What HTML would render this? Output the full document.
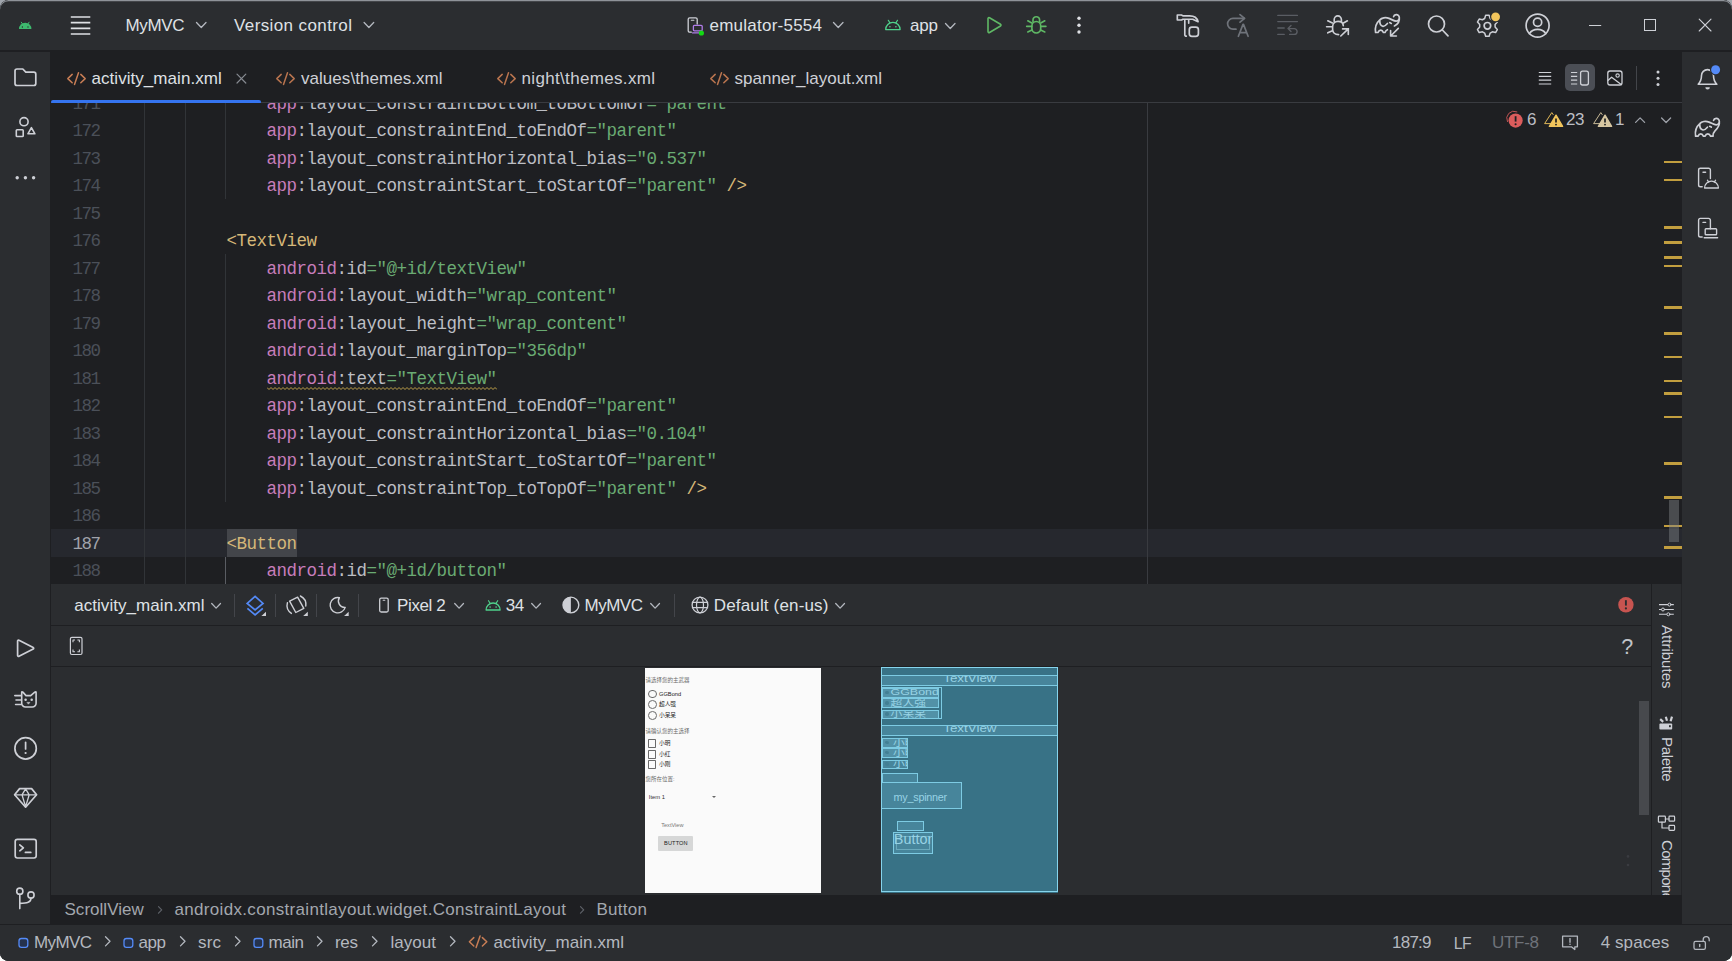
<!DOCTYPE html>
<html lang="en"><head><meta charset="utf-8"><title>activity_main.xml - MyMVC</title>
<style>
html,body{margin:0;padding:0;background:#fff;}
body{width:1732px;height:961px;overflow:hidden;position:relative;font-family:"Liberation Sans","Noto Sans CJK SC",sans-serif;}
#topbg{position:absolute;left:0;top:0;width:1732px;height:14px;background:#a0a5ac;}
#win{position:absolute;left:0;top:0;width:1732px;height:961px;background:#2b2d30;border-radius:8.5px;overflow:hidden;}
.b{position:absolute;display:block;}
.t{position:absolute;white-space:pre;display:block;}
.code{font-family:"Liberation Mono",monospace;}
</style></head><body><div id="topbg"></div><div id="win">
<div class="b" style="left:0px;top:0px;width:1732px;height:961px;background:#2b2d30;"></div>
<div class="b" style="left:50px;top:50px;width:1632px;height:875px;background:#1e1f22;"></div>
<div class="b" style="left:0px;top:50px;width:1732px;height:1.5px;background:#1e1f22;"></div>
<div class="b" style="left:0px;top:51.5px;width:50px;height:872.5px;background:#2b2d30;"></div>
<div class="b" style="left:1682px;top:51.5px;width:50px;height:872.5px;background:#2b2d30;"></div>
<div class="b" style="left:0px;top:924px;width:1732px;height:1px;background:#1e1f22;"></div>
<div class="b" style="left:0px;top:925px;width:1732px;height:36px;background:#2b2d30;"></div>
<div class="b" style="left:0;top:0;width:1732px;height:961px;border-radius:8.5px;box-shadow:inset 0 1.2px 0 #8f9399;pointer-events:none;z-index:50"></div>
<span class="t " style="left:125.50px;top:15.11px;font-size:17px;line-height:22px;letter-spacing:-0.359px;color:#dfe1e5;">MyMVC</span>
<span class="t " style="left:234.00px;top:15.11px;font-size:17px;line-height:22px;letter-spacing:0.396px;color:#dfe1e5;">Version control</span>
<span class="t " style="left:709.50px;top:15.11px;font-size:17px;line-height:22px;letter-spacing:0.240px;color:#dfe1e5;">emulator-5554</span>
<span class="t " style="left:910.00px;top:15.11px;font-size:17px;line-height:22px;letter-spacing:-0.178px;color:#dfe1e5;">app</span>
<div class="b" style="left:51px;top:102px;width:1631px;height:1px;background:#393b40;"></div>
<div class="b" style="left:51px;top:100px;width:210px;height:4px;background:#3574f0;border-radius:2px"></div>
<span class="t " style="left:91.50px;top:68.11px;font-size:17px;line-height:22px;letter-spacing:0.049px;color:#dfe1e5;">activity_main.xml</span>
<span class="t " style="left:301.00px;top:68.11px;font-size:17px;line-height:22px;letter-spacing:0.045px;color:#ced0d6;">values\themes.xml</span>
<span class="t " style="left:521.50px;top:68.11px;font-size:17px;line-height:22px;letter-spacing:0.333px;color:#ced0d6;">night\themes.xml</span>
<span class="t " style="left:734.50px;top:68.11px;font-size:17px;line-height:22px;letter-spacing:0.005px;color:#ced0d6;">spanner_layout.xml</span>
<div class="b" id="code" style="left:51px;top:103px;width:1631px;height:481px;overflow:hidden;background:#1e1f22">
<div class="b" style="left:0px;top:426.0px;width:1631px;height:27.5px;background:#26282e;"></div>
<div class="b" style="left:93px;top:0px;width:1px;height:481px;background:#313438;"></div>
<div class="b" style="left:134px;top:0px;width:1px;height:481px;background:#313438;"></div>
<div class="b" style="left:174px;top:0px;width:1px;height:96.0px;background:#313438;"></div>
<div class="b" style="left:174px;top:151.0px;width:1px;height:247.5px;background:#313438;"></div>
<div class="b" style="left:174px;top:453.5px;width:1px;height:40px;background:#5a5d63;"></div>
<div class="b" style="left:1096px;top:0px;width:1px;height:481px;background:#393b40;"></div>
<div class="b" style="left:176px;top:426.0px;width:70px;height:27.5px;background:#43454a;"></div>
<div class="t code" style="left:215.50px;top:-12.46px;font-size:17.5px;line-height:27px;letter-spacing:-0.502px;"><span style="color:#c77dbb">app</span><span style="color:#bcbec4">:layout_constraintBottom_toBottomOf</span><span style="color:#6aab73">=&quot;parent&quot;</span></div>
<div class="t code" style="left:21.50px;top:-12.46px;font-size:17.5px;line-height:27px;letter-spacing:-1.502px;color:#4b5059">171</div>
<div class="t code" style="left:215.50px;top:15.04px;font-size:17.5px;line-height:27px;letter-spacing:-0.502px;"><span style="color:#c77dbb">app</span><span style="color:#bcbec4">:layout_constraintEnd_toEndOf</span><span style="color:#6aab73">=&quot;parent&quot;</span></div>
<div class="t code" style="left:21.50px;top:15.04px;font-size:17.5px;line-height:27px;letter-spacing:-1.502px;color:#4b5059">172</div>
<div class="t code" style="left:215.50px;top:42.54px;font-size:17.5px;line-height:27px;letter-spacing:-0.502px;"><span style="color:#c77dbb">app</span><span style="color:#bcbec4">:layout_constraintHorizontal_bias</span><span style="color:#6aab73">=&quot;0.537&quot;</span></div>
<div class="t code" style="left:21.50px;top:42.54px;font-size:17.5px;line-height:27px;letter-spacing:-1.502px;color:#4b5059">173</div>
<div class="t code" style="left:215.50px;top:70.04px;font-size:17.5px;line-height:27px;letter-spacing:-0.502px;"><span style="color:#c77dbb">app</span><span style="color:#bcbec4">:layout_constraintStart_toStartOf</span><span style="color:#6aab73">=&quot;parent&quot;</span><span style="color:#d5b778"> /&gt;</span></div>
<div class="t code" style="left:21.50px;top:70.04px;font-size:17.5px;line-height:27px;letter-spacing:-1.502px;color:#4b5059">174</div>
<div class="t code" style="left:215.50px;top:97.54px;font-size:17.5px;line-height:27px;letter-spacing:-0.502px;"></div>
<div class="t code" style="left:21.50px;top:97.54px;font-size:17.5px;line-height:27px;letter-spacing:-1.502px;color:#4b5059">175</div>
<div class="t code" style="left:175.50px;top:125.04px;font-size:17.5px;line-height:27px;letter-spacing:-0.502px;"><span style="color:#d5b778">&lt;TextView</span></div>
<div class="t code" style="left:21.50px;top:125.04px;font-size:17.5px;line-height:27px;letter-spacing:-1.502px;color:#4b5059">176</div>
<div class="t code" style="left:215.50px;top:152.54px;font-size:17.5px;line-height:27px;letter-spacing:-0.502px;"><span style="color:#c77dbb">android</span><span style="color:#bcbec4">:id</span><span style="color:#6aab73">=&quot;@+id/textView&quot;</span></div>
<div class="t code" style="left:21.50px;top:152.54px;font-size:17.5px;line-height:27px;letter-spacing:-1.502px;color:#4b5059">177</div>
<div class="t code" style="left:215.50px;top:180.04px;font-size:17.5px;line-height:27px;letter-spacing:-0.502px;"><span style="color:#c77dbb">android</span><span style="color:#bcbec4">:layout_width</span><span style="color:#6aab73">=&quot;wrap_content&quot;</span></div>
<div class="t code" style="left:21.50px;top:180.04px;font-size:17.5px;line-height:27px;letter-spacing:-1.502px;color:#4b5059">178</div>
<div class="t code" style="left:215.50px;top:207.54px;font-size:17.5px;line-height:27px;letter-spacing:-0.502px;"><span style="color:#c77dbb">android</span><span style="color:#bcbec4">:layout_height</span><span style="color:#6aab73">=&quot;wrap_content&quot;</span></div>
<div class="t code" style="left:21.50px;top:207.54px;font-size:17.5px;line-height:27px;letter-spacing:-1.502px;color:#4b5059">179</div>
<div class="t code" style="left:215.50px;top:235.04px;font-size:17.5px;line-height:27px;letter-spacing:-0.502px;"><span style="color:#c77dbb">android</span><span style="color:#bcbec4">:layout_marginTop</span><span style="color:#6aab73">=&quot;356dp&quot;</span></div>
<div class="t code" style="left:21.50px;top:235.04px;font-size:17.5px;line-height:27px;letter-spacing:-1.502px;color:#4b5059">180</div>
<div class="t code" style="left:215.50px;top:262.54px;font-size:17.5px;line-height:27px;letter-spacing:-0.502px;"><span style="color:#c77dbb">android</span><span style="color:#bcbec4">:text</span><span style="color:#6aab73">=&quot;TextView&quot;</span></div>
<div class="t code" style="left:21.50px;top:262.54px;font-size:17.5px;line-height:27px;letter-spacing:-1.502px;color:#4b5059">181</div>
<div class="t code" style="left:215.50px;top:290.04px;font-size:17.5px;line-height:27px;letter-spacing:-0.502px;"><span style="color:#c77dbb">app</span><span style="color:#bcbec4">:layout_constraintEnd_toEndOf</span><span style="color:#6aab73">=&quot;parent&quot;</span></div>
<div class="t code" style="left:21.50px;top:290.04px;font-size:17.5px;line-height:27px;letter-spacing:-1.502px;color:#4b5059">182</div>
<div class="t code" style="left:215.50px;top:317.54px;font-size:17.5px;line-height:27px;letter-spacing:-0.502px;"><span style="color:#c77dbb">app</span><span style="color:#bcbec4">:layout_constraintHorizontal_bias</span><span style="color:#6aab73">=&quot;0.104&quot;</span></div>
<div class="t code" style="left:21.50px;top:317.54px;font-size:17.5px;line-height:27px;letter-spacing:-1.502px;color:#4b5059">183</div>
<div class="t code" style="left:215.50px;top:345.04px;font-size:17.5px;line-height:27px;letter-spacing:-0.502px;"><span style="color:#c77dbb">app</span><span style="color:#bcbec4">:layout_constraintStart_toStartOf</span><span style="color:#6aab73">=&quot;parent&quot;</span></div>
<div class="t code" style="left:21.50px;top:345.04px;font-size:17.5px;line-height:27px;letter-spacing:-1.502px;color:#4b5059">184</div>
<div class="t code" style="left:215.50px;top:372.54px;font-size:17.5px;line-height:27px;letter-spacing:-0.502px;"><span style="color:#c77dbb">app</span><span style="color:#bcbec4">:layout_constraintTop_toTopOf</span><span style="color:#6aab73">=&quot;parent&quot;</span><span style="color:#d5b778"> /&gt;</span></div>
<div class="t code" style="left:21.50px;top:372.54px;font-size:17.5px;line-height:27px;letter-spacing:-1.502px;color:#4b5059">185</div>
<div class="t code" style="left:215.50px;top:400.04px;font-size:17.5px;line-height:27px;letter-spacing:-0.502px;"></div>
<div class="t code" style="left:21.50px;top:400.04px;font-size:17.5px;line-height:27px;letter-spacing:-1.502px;color:#4b5059">186</div>
<div class="t code" style="left:175.50px;top:427.54px;font-size:17.5px;line-height:27px;letter-spacing:-0.502px;"><span style="color:#d5b778">&lt;Button</span></div>
<div class="t code" style="left:21.50px;top:427.54px;font-size:17.5px;line-height:27px;letter-spacing:-1.502px;color:#a1a3ab">187</div>
<div class="t code" style="left:215.50px;top:455.04px;font-size:17.5px;line-height:27px;letter-spacing:-0.502px;"><span style="color:#c77dbb">android</span><span style="color:#bcbec4">:id</span><span style="color:#6aab73">=&quot;@+id/button&quot;</span></div>
<div class="t code" style="left:21.50px;top:455.04px;font-size:17.5px;line-height:27px;letter-spacing:-1.502px;color:#4b5059">188</div>
<svg class="b" style="left:216px;top:284.0px" width="230" height="4" viewBox="0 0 230 4"><polyline points="0,0.5 2,2.5 4,0.5 6,2.5 8,0.5 10,2.5 12,0.5 14,2.5 16,0.5 18,2.5 20,0.5 22,2.5 24,0.5 26,2.5 28,0.5 30,2.5 32,0.5 34,2.5 36,0.5 38,2.5 40,0.5 42,2.5 44,0.5 46,2.5 48,0.5 50,2.5 52,0.5 54,2.5 56,0.5 58,2.5 60,0.5 62,2.5 64,0.5 66,2.5 68,0.5 70,2.5 72,0.5 74,2.5 76,0.5 78,2.5 80,0.5 82,2.5 84,0.5 86,2.5 88,0.5 90,2.5 92,0.5 94,2.5 96,0.5 98,2.5 100,0.5 102,2.5 104,0.5 106,2.5 108,0.5 110,2.5 112,0.5 114,2.5 116,0.5 118,2.5 120,0.5 122,2.5 124,0.5 126,2.5 128,0.5 130,2.5 132,0.5 134,2.5 136,0.5 138,2.5 140,0.5 142,2.5 144,0.5 146,2.5 148,0.5 150,2.5 152,0.5 154,2.5 156,0.5 158,2.5 160,0.5 162,2.5 164,0.5 166,2.5 168,0.5 170,2.5 172,0.5 174,2.5 176,0.5 178,2.5 180,0.5 182,2.5 184,0.5 186,2.5 188,0.5 190,2.5 192,0.5 194,2.5 196,0.5 198,2.5 200,0.5 202,2.5 204,0.5 206,2.5 208,0.5 210,2.5 212,0.5 214,2.5 216,0.5 218,2.5 220,0.5 222,2.5 224,0.5 226,2.5 228,0.5 230,2.5" fill="none" stroke="#bfa14a" stroke-width="1"/></svg>
<div class="b" style="left:1613px;top:57.80000000000001px;width:17.5px;height:2.6px;background:#c29e3f;"></div>
<div class="b" style="left:1613px;top:75.80000000000001px;width:17.5px;height:2.6px;background:#c29e3f;"></div>
<div class="b" style="left:1613px;top:123.30000000000001px;width:17.5px;height:2.6px;background:#c29e3f;"></div>
<div class="b" style="left:1613px;top:138.3px;width:17.5px;height:2.6px;background:#c29e3f;"></div>
<div class="b" style="left:1613px;top:153.3px;width:17.5px;height:2.6px;background:#c29e3f;"></div>
<div class="b" style="left:1613px;top:161.8px;width:17.5px;height:2.6px;background:#c29e3f;"></div>
<div class="b" style="left:1613px;top:203.3px;width:17.5px;height:2.6px;background:#c29e3f;"></div>
<div class="b" style="left:1613px;top:229.3px;width:17.5px;height:2.6px;background:#c29e3f;"></div>
<div class="b" style="left:1613px;top:252.8px;width:17.5px;height:2.6px;background:#c29e3f;"></div>
<div class="b" style="left:1613px;top:276.8px;width:17.5px;height:2.6px;background:#c29e3f;"></div>
<div class="b" style="left:1613px;top:289.3px;width:17.5px;height:2.6px;background:#c29e3f;"></div>
<div class="b" style="left:1613px;top:312.8px;width:17.5px;height:2.6px;background:#c29e3f;"></div>
<div class="b" style="left:1613px;top:359.3px;width:17.5px;height:2.6px;background:#c29e3f;"></div>
<div class="b" style="left:1613px;top:393.3px;width:17.5px;height:2.6px;background:#c29e3f;"></div>
<div class="b" style="left:1613px;top:421.79999999999995px;width:17.5px;height:2.6px;background:#c29e3f;"></div>
<div class="b" style="left:1613px;top:443.29999999999995px;width:17.5px;height:2.6px;background:#c29e3f;"></div>
<div class="b" style="left:1618px;top:397px;width:10px;height:42px;background:rgba(128,130,135,0.45);"></div>
<span class="t " style="left:1527.00px;top:109.41px;font-size:17px;line-height:22px;letter-spacing:0.000px;color:#bcbec4;margin-left:-51px;margin-top:-103px;">6</span>
<span class="t " style="left:1566.00px;top:109.41px;font-size:17px;line-height:22px;letter-spacing:-0.404px;color:#bcbec4;margin-left:-51px;margin-top:-103px;">23</span>
<span class="t " style="left:1615.00px;top:109.41px;font-size:17px;line-height:22px;letter-spacing:0.000px;color:#bcbec4;margin-left:-51px;margin-top:-103px;">1</span>
</div>
<div class="b" style="left:51px;top:584px;width:1631px;height:310.5px;background:#2b2d30;"></div>
<div class="b" style="left:51px;top:625px;width:1600.5px;height:1px;background:#1e1f22;"></div>
<div class="b" style="left:51px;top:665.5px;width:1600.5px;height:1px;background:#1e1f22;"></div>
<div class="b" style="left:1651px;top:584px;width:1px;height:310.5px;background:#1e1f22;"></div>
<div class="b" style="left:1681px;top:584px;width:1px;height:310.5px;background:#232427;"></div>
<div class="b" style="left:234px;top:593.5px;width:1px;height:23px;background:#43454a;"></div>
<div class="b" style="left:275px;top:593.5px;width:1px;height:23px;background:#43454a;"></div>
<div class="b" style="left:316px;top:593.5px;width:1px;height:23px;background:#43454a;"></div>
<div class="b" style="left:358px;top:593.5px;width:1px;height:23px;background:#43454a;"></div>
<div class="b" style="left:674px;top:593.5px;width:1px;height:23px;background:#43454a;"></div>
<span class="t " style="left:74.20px;top:595.11px;font-size:17px;line-height:22px;letter-spacing:0.055px;color:#dfe1e5;">activity_main.xml</span>
<span class="t " style="left:397.00px;top:595.11px;font-size:17px;line-height:22px;letter-spacing:-0.369px;color:#dfe1e5;">Pixel 2</span>
<span class="t " style="left:505.70px;top:595.11px;font-size:17px;line-height:22px;letter-spacing:-0.304px;color:#dfe1e5;">34</span>
<span class="t " style="left:584.50px;top:595.11px;font-size:17px;line-height:22px;letter-spacing:-0.484px;color:#dfe1e5;">MyMVC</span>
<span class="t " style="left:713.80px;top:595.11px;font-size:17px;line-height:22px;letter-spacing:0.154px;color:#dfe1e5;">Default (en-us)</span>
<span class="t " style="left:1621.30px;top:632.95px;font-size:21.5px;line-height:28px;letter-spacing:0.000px;color:#c0c3c9;">?</span>
<div class="b" style="left:51px;top:894.5px;width:1631px;height:29.5px;background:#1e1f22;"></div>
<span class="t " style="left:64.50px;top:899.11px;font-size:17px;line-height:22px;letter-spacing:0.022px;color:#a3a7ae;">ScrollView</span>
<span class="t " style="left:174.50px;top:899.11px;font-size:17px;line-height:22px;letter-spacing:0.321px;color:#a3a7ae;">androidx.constraintlayout.widget.ConstraintLayout</span>
<span class="t " style="left:596.50px;top:899.11px;font-size:17px;line-height:22px;letter-spacing:0.271px;color:#a3a7ae;">Button</span>
<span class="t " style="left:34.00px;top:932.11px;font-size:17px;line-height:22px;letter-spacing:-0.609px;color:#b4b8bf;">MyMVC</span>
<span class="t " style="left:138.50px;top:932.11px;font-size:17px;line-height:22px;letter-spacing:-0.428px;color:#b4b8bf;">app</span>
<span class="t " style="left:198.00px;top:932.11px;font-size:17px;line-height:22px;letter-spacing:0.169px;color:#b4b8bf;">src</span>
<span class="t " style="left:268.50px;top:932.11px;font-size:17px;line-height:22px;letter-spacing:-0.452px;color:#b4b8bf;">main</span>
<span class="t " style="left:335.00px;top:932.11px;font-size:17px;line-height:22px;letter-spacing:-0.307px;color:#b4b8bf;">res</span>
<span class="t " style="left:390.50px;top:932.11px;font-size:17px;line-height:22px;letter-spacing:0.029px;color:#b4b8bf;">layout</span>
<span class="t " style="left:493.50px;top:932.11px;font-size:17px;line-height:22px;letter-spacing:0.067px;color:#b4b8bf;">activity_main.xml</span>
<span class="t " style="left:1392.00px;top:932.11px;font-size:17px;line-height:22px;letter-spacing:-0.759px;color:#b4b8bf;">187:9</span>
<span class="t " style="left:1453.80px;top:933.03px;font-size:15.8px;line-height:21px;letter-spacing:-0.639px;color:#b4b8bf;">LF</span>
<span class="t " style="left:1492.00px;top:932.11px;font-size:17px;line-height:22px;letter-spacing:-0.290px;color:#6f737a;">UTF-8</span>
<span class="t " style="left:1600.70px;top:932.11px;font-size:17px;line-height:22px;letter-spacing:0.081px;color:#b4b8bf;">4 spaces</span>
<span class="t" style="left:1677.00px;top:625.00px;font-size:15px;line-height:20px;letter-spacing:0.016px;color:#ced0d6;transform-origin:0 0;transform:rotate(90deg)">Attributes</span>
<span class="t" style="left:1677.00px;top:737.00px;font-size:15px;line-height:20px;letter-spacing:-0.332px;color:#ced0d6;transform-origin:0 0;transform:rotate(90deg)">Palette</span>
<div class="b" style="left:1652px;top:830px;width:30px;height:64.5px;overflow:hidden">
<span class="t" style="left:25.00px;top:10.00px;font-size:15px;line-height:20px;letter-spacing:-0.700px;color:#ced0d6;transform-origin:0 0;transform:rotate(90deg)">Component Tree</span>
</div>
<div class="b" style="left:645px;top:667.5px;width:176.2px;height:225.8px;background:#fafafa;overflow:hidden;font-family:'Liberation Sans','Noto Sans CJK SC',sans-serif">
<span class="t" style="left:0.60px;top:8.50px;font-size:5.5px;line-height:8px;color:#6a6a6a;">请选择您的主武器</span>
<div class="b" style="left:3.1000000000000227px;top:22.00px;width:6.8px;height:6.8px;border:0.9px solid #6a6a6a;border-radius:50%;box-sizing:content-box"></div>
<span class="t" style="left:14.00px;top:22.10px;font-size:5.7px;line-height:8px;color:#1a1a1a;">GGBond</span>
<div class="b" style="left:3.1000000000000227px;top:32.80px;width:6.8px;height:6.8px;border:0.9px solid #6a6a6a;border-radius:50%;box-sizing:content-box"></div>
<span class="t" style="left:14.00px;top:32.90px;font-size:5.7px;line-height:8px;color:#1a1a1a;">超人强</span>
<div class="b" style="left:3.1000000000000227px;top:43.70px;width:6.8px;height:6.8px;border:0.9px solid #6a6a6a;border-radius:50%;box-sizing:content-box"></div>
<span class="t" style="left:14.00px;top:43.80px;font-size:5.7px;line-height:8px;color:#1a1a1a;">小呆呆</span>
<span class="t" style="left:0.60px;top:59.70px;font-size:5.5px;line-height:8px;color:#6a6a6a;">请确认您的主选择</span>
<div class="b" style="left:3.2999999999999545px;top:71.90px;width:6.2px;height:6.2px;border:0.9px solid #6a6a6a;border-radius:0.8px;box-sizing:content-box"></div>
<span class="t" style="left:14.00px;top:71.70px;font-size:5.7px;line-height:8px;color:#1a1a1a;">小明</span>
<div class="b" style="left:3.2999999999999545px;top:82.90px;width:6.2px;height:6.2px;border:0.9px solid #6a6a6a;border-radius:0.8px;box-sizing:content-box"></div>
<span class="t" style="left:14.00px;top:82.70px;font-size:5.7px;line-height:8px;color:#1a1a1a;">小红</span>
<div class="b" style="left:3.2999999999999545px;top:92.90px;width:6.2px;height:6.2px;border:0.9px solid #6a6a6a;border-radius:0.8px;box-sizing:content-box"></div>
<span class="t" style="left:14.00px;top:92.70px;font-size:5.7px;line-height:8px;color:#1a1a1a;">小刚</span>
<span class="t" style="left:0.60px;top:107.20px;font-size:5.5px;line-height:8px;color:#6a6a6a;">您所在位置:</span>
<span class="t" style="left:3.80px;top:125.10px;font-size:5.8px;line-height:8px;color:#333;">Item 1</span>
<div class="b" style="left:66.60000000000002px;top:128.10000000000002px;width:0;height:0;border-left:2.1px solid transparent;border-right:2.1px solid transparent;border-top:2.2px solid #666"></div>
<span class="t" style="left:16.20px;top:153.70px;font-size:5.6px;line-height:8px;color:#777;">TextView</span>
<div class="b" style="left:13.200000000000045px;top:168.0px;width:34.8px;height:15.6px;background:#d6d7d7;border-radius:1px"></div>
<span class="t" style="left:19.00px;top:171.90px;font-size:5.6px;line-height:8px;color:#222;letter-spacing:0.15px;">BUTTON</span>
</div>
<div class="b" id="bp" style="left:881px;top:667px;width:177.3px;height:226px;background:#387286;overflow:hidden">
<div class="b" style="left:0.00px;top:7.80px;width:175.30px;height:9.50px;background:#47859b;border:1px solid #7dcbe3;overflow:hidden;">
<span class="t" style="left:61.20px;top:-5.54px;font-size:13.4px;line-height:16px;letter-spacing:0px;color:#97d3e5;transform-origin:0 12.64px;transform:scaleY(0.8);">TextView</span>
</div>
<div class="b" style="left:0.00px;top:20.00px;width:58.60px;height:30.20px;background:transparent;border:1px solid #7dcbe3;overflow:hidden;">
</div>
<div class="b" style="left:0.60px;top:20.60px;width:55.80px;height:8.00px;background:#5291a7;border:1px solid #7dcbe3;overflow:hidden;">
<div class="b" style="left:2.6px;top:2.10px;width:3.6px;height:3.6px;border-radius:50%;background:#427f94"></div>
<span class="t" style="left:8.00px;top:-4.50px;font-size:12.4px;line-height:15px;letter-spacing:0px;color:#97d3e5;transform-origin:0 11.80px;transform:scaleY(0.8);">GGBond</span>
</div>
<div class="b" style="left:0.60px;top:31.40px;width:55.80px;height:7.80px;background:#5291a7;border:1px solid #7dcbe3;overflow:hidden;">
<div class="b" style="left:2.6px;top:2.00px;width:3.6px;height:3.6px;border-radius:50%;background:#427f94"></div>
<span class="t" style="left:8.00px;top:-3.99px;font-size:11.8px;line-height:14px;letter-spacing:0px;color:#97d3e5;transform-origin:0 11.09px;transform:scaleY(0.8);">超人强</span>
</div>
<div class="b" style="left:0.60px;top:42.80px;width:55.80px;height:7.00px;background:#5291a7;border:1px solid #7dcbe3;overflow:hidden;">
<div class="b" style="left:2.6px;top:1.60px;width:3.6px;height:3.6px;border-radius:50%;background:#427f94"></div>
<span class="t" style="left:8.00px;top:-4.79px;font-size:11.8px;line-height:14px;letter-spacing:0px;color:#97d3e5;transform-origin:0 11.09px;transform:scaleY(0.8);">小呆呆</span>
</div>
<div class="b" style="left:0.00px;top:57.80px;width:175.30px;height:9.50px;background:#47859b;border:1px solid #7dcbe3;overflow:hidden;">
<span class="t" style="left:61.20px;top:-5.54px;font-size:13.4px;line-height:16px;letter-spacing:0px;color:#97d3e5;transform-origin:0 12.64px;transform:scaleY(0.8);">TextView</span>
</div>
<div class="b" style="left:0.60px;top:71.00px;width:24.80px;height:8.00px;background:#5291a7;border:1px solid #7dcbe3;overflow:hidden;">
<div class="b" style="left:2.4px;top:2.00px;width:4px;height:3.4px;border-radius:40% 60% 40% 60%;background:#427f94"></div>
<span class="t" style="left:10.40px;top:-3.99px;font-size:11.8px;line-height:14px;letter-spacing:0px;color:#97d3e5;transform-origin:0 11.09px;transform:scaleY(0.8);">小明</span>
</div>
<div class="b" style="left:0.60px;top:81.00px;width:24.80px;height:7.80px;background:#5291a7;border:1px solid #7dcbe3;overflow:hidden;">
<div class="b" style="left:2.4px;top:1.90px;width:4px;height:3.4px;border-radius:40% 60% 40% 60%;background:#427f94"></div>
<span class="t" style="left:10.40px;top:-4.19px;font-size:11.8px;line-height:14px;letter-spacing:0px;color:#97d3e5;transform-origin:0 11.09px;transform:scaleY(0.8);">小明</span>
</div>
<div class="b" style="left:0.60px;top:92.60px;width:24.80px;height:7.40px;background:#47859b;border:1px solid #7dcbe3;overflow:hidden;">
<div class="b" style="left:2.4px;top:1.70px;width:4px;height:3.4px;border-radius:40% 60% 40% 60%;background:#427f94"></div>
<span class="t" style="left:10.40px;top:-4.59px;font-size:11.8px;line-height:14px;letter-spacing:0px;color:#97d3e5;transform-origin:0 11.09px;transform:scaleY(0.8);">小明</span>
</div>
<div class="b" style="left:0.60px;top:106.00px;width:34.80px;height:8.00px;background:#47859b;border:1px solid #7dcbe3;overflow:hidden;">
</div>
<div class="b" style="left:0.00px;top:114.80px;width:78.60px;height:25.40px;background:#47859b;border:1px solid #7dcbe3;overflow:hidden;">
<span class="t" style="left:11.60px;top:8.16px;font-size:10.8px;line-height:13px;letter-spacing:-0.247px;color:#97d3e5;">my_spinner</span>
</div>
<div class="b" style="left:15.60px;top:153.80px;width:25.00px;height:8.60px;background:#47859b;border:1px solid #7dcbe3;overflow:hidden;">
</div>
<div class="b" style="left:11.80px;top:164.60px;width:37.80px;height:20.60px;background:#47859b;border:1px solid #7dcbe3;overflow:hidden;">
<div class="b" style="left:2.4px;top:3.4px;width:31.6px;height:11.6px;border:1px solid #6aaabd;box-sizing:content-box"></div>
<span class="t" style="left:0.00px;top:-1.29px;font-size:14.4px;line-height:17px;letter-spacing:0px;color:#97d3e5;">Button</span>
</div>
<div class="b" style="left:0;top:0;width:174.5px;height:223px;border:1.3px solid #86d4ec"></div>
</div>
<svg class="b" style="left:15px;top:15px;" width="22" height="20" viewBox="15 15 22 20" fill="none" stroke-linecap="round" stroke-linejoin="round"><path d="M19 29a6.2 6.2 0 0 1 12.4 0z" fill="#3dbb6e" stroke="none"/><path d="M21.3 22.2l1.6 2.4M29.1 22.2l-1.6 2.4" stroke="#3dbb6e" stroke-width="1"/><circle cx="22.4" cy="27" r="0.7" fill="#2b2d30"/><circle cx="28" cy="27" r="0.7" fill="#2b2d30"/></svg>
<svg class="b" style="left:68px;top:12px;" width="26" height="26" viewBox="68 12 26 26" fill="none" stroke-linecap="round" stroke-linejoin="round"><path d="M70.8 17H90.3" stroke="#dfe1e5" stroke-width="1.7" stroke-linecap="butt"/><path d="M70.8 22.7H90.3" stroke="#dfe1e5" stroke-width="1.7" stroke-linecap="butt"/><path d="M70.8 28.3H90.3" stroke="#dfe1e5" stroke-width="1.7" stroke-linecap="butt"/><path d="M70.8 34H90.3" stroke="#dfe1e5" stroke-width="1.7" stroke-linecap="butt"/></svg>
<svg class="b" style="left:190px;top:18px;" width="20" height="14" viewBox="190 18 20 14" fill="none" stroke-linecap="round" stroke-linejoin="round"><path d="M196.5 22.5L201.25 27.5L206.0 22.5" stroke="#b4b8bf" stroke-width="1.3"/></svg>
<svg class="b" style="left:358px;top:18px;" width="20" height="14" viewBox="358 18 20 14" fill="none" stroke-linecap="round" stroke-linejoin="round"><path d="M364.1 22.5L368.9 27.5L373.7 22.5" stroke="#b4b8bf" stroke-width="1.3"/></svg>
<svg class="b" style="left:828px;top:18px;" width="20" height="14" viewBox="828 18 20 14" fill="none" stroke-linecap="round" stroke-linejoin="round"><path d="M833.5 22.5L838.25 27.5L843.0 22.5" stroke="#b4b8bf" stroke-width="1.3"/></svg>
<svg class="b" style="left:942px;top:18px;" width="20" height="14" viewBox="942 18 20 14" fill="none" stroke-linecap="round" stroke-linejoin="round"><path d="M945.5 23.5L950.25 28.5L955.0 23.5" stroke="#b4b8bf" stroke-width="1.3"/></svg>
<svg class="b" style="left:684px;top:14px;" width="24" height="24" viewBox="684 14 24 24" fill="none" stroke-linecap="round" stroke-linejoin="round"><path d="M697.2 24V19.3a1.5 1.5 0 0 0-1.5-1.5h-6a1.5 1.5 0 0 0-1.5 1.5v11.4a1.5 1.5 0 0 0 1.5 1.5h1.6" stroke="#ced0d6" stroke-width="1.3"/><path d="M691.3 20.2h2.6" stroke="#ced0d6" stroke-width="1.1"/><rect x="693.4" y="25.3" width="8.8" height="5.5" rx="1" stroke="#b07ce8" stroke-width="1.3"/><path d="M692.6 32.9h7" stroke="#b07ce8" stroke-width="1.2"/><circle cx="701.4" cy="33" r="2.6" fill="#13d913"/></svg>
<svg class="b" style="left:882px;top:16px;" width="22" height="18" viewBox="882 16 22 18" fill="none" stroke-linecap="round" stroke-linejoin="round"><path d="M885.6999999999999 29.6a7.2 7.2 0 0 1 14.4 0z" stroke="#4fd18b" stroke-width="1.3"/><path d="M888.3 20.3l1.6 2.6M897.5 20.3l-1.6 2.6" stroke="#4fd18b" stroke-width="1.1700000000000002"/><circle cx="889.9" cy="26.700000000000003" r="0.8" fill="#4fd18b"/><circle cx="895.9" cy="26.700000000000003" r="0.8" fill="#4fd18b"/></svg>
<svg class="b" style="left:982px;top:12px;" width="26" height="26" viewBox="982 12 26 26" fill="none" stroke-linecap="round" stroke-linejoin="round"><path d="M988 18.6v13a1 1 0 0 0 1.5.85l11-6.5a1 1 0 0 0 0-1.7l-11-6.5a1 1 0 0 0-1.5.85z" stroke="#5fb865" stroke-width="1.6"/></svg>
<svg class="b" style="left:1022px;top:12px;" width="28" height="26" viewBox="1022 12 28 26" fill="none" stroke-linecap="round" stroke-linejoin="round"><rect x="1031.8999999999999" y="21.5" width="8.8" height="11.5" rx="4.4" stroke="#5fb865" stroke-width="1.65"/><path d="M1033.0 21.700000000000003V20.1a3.3 3.400 0 0 1 6.600 0V21.700000000000003" stroke="#5fb865" stroke-width="1.65"/><path d="M1031.8 22.900000000000002L1027.8 20.8M1031.7 26.400000000000002H1026.7M1031.8999999999999 30.1L1027.8 31.900000000000002" stroke="#5fb865" stroke-width="1.65"/><path d="M1040.8 22.900000000000002L1044.8 20.8M1040.8999999999999 26.400000000000002H1045.8999999999999M1040.7 30.1L1044.8 31.900000000000002" stroke="#5fb865" stroke-width="1.65"/></svg>
<svg class="b" style="left:1072px;top:12px;" width="14" height="26" viewBox="1072 12 14 26" fill="none" stroke-linecap="round" stroke-linejoin="round"><circle cx="1079" cy="18.3" r="1.7" fill="#dfe1e5"/><circle cx="1079" cy="25.2" r="1.7" fill="#dfe1e5"/><circle cx="1079" cy="32" r="1.7" fill="#dfe1e5"/></svg>
<svg class="b" style="left:1172px;top:10px;" width="32" height="30" viewBox="1172 10 32 30" fill="none" stroke-linecap="round" stroke-linejoin="round"><path d="M1177.300 15h4.200l1.400.900h6.800c4.400 0 7.400 2 8.400 5.800l-5.400-2.500h-9.800l-1.400.800h-4.200z" stroke="#ced0d6" stroke-width="1.650"/><path d="M1184.800 20.400V34.800a1.300 1.300 0 0 0 1.500 1.300" stroke="#ced0d6" stroke-width="1.650"/><path d="M1188.700 20.400v2.800" stroke="#ced0d6" stroke-width="1.650"/><rect x="1189.300" y="27.100" width="9.100" height="9.300" rx="2.600" stroke="#ced0d6" stroke-width="1.700"/></svg>
<svg class="b" style="left:1224px;top:10px;" width="28" height="30" viewBox="1224 10 28 30" fill="none" stroke-linecap="round" stroke-linejoin="round"><path d="M1236 29.200H1233a5.400 5.400 0 0 1 0-10.800H1244.200" stroke="#6f737a" stroke-width="1.7"/><path d="M1240 14.600l4.600 3.800-4.600 3.800" stroke="#6f737a" stroke-width="1.7"/><path d="M1238.400 36.300L1243 24.400h.500L1248.100 36.300M1239.900 32.600h6.800" stroke="#6f737a" stroke-width="1.7"/></svg>
<svg class="b" style="left:1274px;top:10px;" width="28" height="30" viewBox="1274 10 28 30" fill="none" stroke-linecap="round" stroke-linejoin="round"><path d="M1277.8 15.4h19.6M1277.8 21.6h19.6M1277.8 28h6.4M1277.8 34.4h6.4" stroke="#5a5d63" stroke-width="1.4"/><path d="M1288 28.6h6.2a2.9 2.9 0 0 1 0 5.8h-4.6M1291 25.6l-3 3 3 3" stroke="#5a5d63" stroke-width="1.4"/></svg>
<svg class="b" style="left:1322px;top:10px;" width="32" height="30" viewBox="1322 10 32 30" fill="none" stroke-linecap="round" stroke-linejoin="round"><path d="M1343.300 25.600C1343.100 22.900 1341 21.400 1338 21.400C1335 21.400 1332.600 23.600 1332.600 26.800V29.200C1332.600 32.400 1335 34.600 1338.600 34.600" stroke="#ced0d6" stroke-width="1.650"/><path d="M1334.200 21.400V19.600a3.600 3.700 0 0 1 7.200 0V21.400" stroke="#ced0d6" stroke-width="1.650"/><path d="M1332.400 23L1327.800 20.800M1332 26.700H1326.600M1332.400 30.800L1327.800 32.800M1343.400 23L1347.400 20.800" stroke="#ced0d6" stroke-width="1.650"/><path d="M1340.800 36L1348 29.200M1342.600 28.900H1348.300V34.400" stroke="#ced0d6" stroke-width="1.650" stroke-linejoin="miter"/></svg>
<svg class="b" style="left:1370px;top:8px;" width="36" height="32" viewBox="1370 8 36 32" fill="none" stroke-linecap="round" stroke-linejoin="round"><path d="M1375.60 32.50C1374.80 27.80 1376.40 22.90 1379.80 19.90C1381.60 17.80 1385.60 17.00 1389.00 18.40C1392.00 19.60 1394.00 21.10 1396.20 21.10C1398.20 21.10 1399.40 19.30 1399.30 17.50C1399.20 15.70 1397.80 14.50 1396.20 14.60C1394.80 14.70 1393.80 15.50 1393.60 16.60M1399.30 17.50C1399.70 20.90 1397.80 24.30 1394.40 25.90M1375.60 32.50H1378.00C1378.60 30.90 1379.60 30.10 1380.80 30.10C1381.90 30.10 1382.80 30.90 1383.40 32.50H1385.00C1385.60 30.90 1386.40 30.10 1387.40 29.70M1379.80 20.10C1379.60 23.30 1380.80 25.90 1383.00 26.30C1384.80 26.50 1386.20 24.90 1387.40 23.50" stroke="#ced0d6" stroke-width="1.7"/><path d="M1389.70 22.60L1391.30 23.40" stroke="#ced0d6" stroke-width="1.7"/><path d="M1398.300 28.400L1391 35.700M1390.600 30.600V36H1396.400" stroke="#ced0d6" stroke-width="1.6"/></svg>
<svg class="b" style="left:1424px;top:10px;" width="30" height="30" viewBox="1424 10 30 30" fill="none" stroke-linecap="round" stroke-linejoin="round"><circle cx="1436.5" cy="24" r="8" stroke="#ced0d6" stroke-width="1.7"/><path d="M1442.400 30l5.600 5.800" stroke="#ced0d6" stroke-width="1.7"/></svg>
<svg class="b" style="left:1472px;top:8px;" width="32" height="32" viewBox="1472 8 32 32" fill="none" stroke-linecap="round" stroke-linejoin="round"><path d="M1485.69 15.34L1489.11 15.34L1490.16 18.50L1492.34 19.76L1495.60 19.09L1497.32 22.05L1495.10 24.54L1495.10 27.06L1497.32 29.55L1495.60 32.51L1492.34 31.84L1490.16 33.10L1489.11 36.26L1485.69 36.26L1484.64 33.10L1482.46 31.84L1479.20 32.51L1477.48 29.55L1479.70 27.06L1479.70 24.54L1477.48 22.05L1479.20 19.09L1482.46 19.76L1484.64 18.50z" stroke="#ced0d6" stroke-width="1.5" stroke-linejoin="round"/><circle cx="1487.4" cy="25.8" r="3.3" stroke="#ced0d6" stroke-width="1.7"/><circle cx="1495.6" cy="16.8" r="5.6" fill="#2b2d30"/><circle cx="1495.6" cy="16.8" r="4.4" fill="#f2c55c"/></svg>
<svg class="b" style="left:1522px;top:10px;" width="32" height="32" viewBox="1522 10 32 32" fill="none" stroke-linecap="round" stroke-linejoin="round"><circle cx="1537.6" cy="25.6" r="11.5" stroke="#ced0d6" stroke-width="1.7"/><circle cx="1537.6" cy="22.2" r="4.1" stroke="#ced0d6" stroke-width="1.7"/><path d="M1529.400 33.600c1.800-3 5-4.200 8.200-4.200s6.400 1.200 8.200 4.200" stroke="#ced0d6" stroke-width="1.7"/></svg>
<svg class="b" style="left:1585px;top:15px;" width="20" height="20" viewBox="1585 15 20 20" fill="none" stroke-linecap="round" stroke-linejoin="round"><path d="M1589 25.500H1601.200" stroke="#ced0d6" stroke-width="1" stroke-linecap="butt"/></svg>
<svg class="b" style="left:1640px;top:15px;" width="20" height="20" viewBox="1640 15 20 20" fill="none" stroke-linecap="round" stroke-linejoin="round"><rect x="1644.500" y="19.500" width="11" height="11" stroke="#ced0d6" stroke-width="1" stroke-linejoin="miter"/></svg>
<svg class="b" style="left:1695px;top:15px;" width="20" height="20" viewBox="1695 15 20 20" fill="none" stroke-linecap="round" stroke-linejoin="round"><path d="M1699.200 19.200L1711 31M1711 19.200L1699.200 31" stroke="#ced0d6" stroke-width="1.1"/></svg>
<svg class="b" style="left:64.5px;top:68px;" width="24" height="22" viewBox="64.5 68 24 22" fill="none" stroke-linecap="round" stroke-linejoin="round"><path d="M71.7 74.39999999999999L67.3 78.6L71.7 82.8M80.3 74.39999999999999L84.7 78.6L80.3 82.8M78.0 72.8L74.0 84.39999999999999" stroke="#c77d55" stroke-width="1.5"/></svg>
<svg class="b" style="left:273.5px;top:68px;" width="24" height="22" viewBox="273.5 68 24 22" fill="none" stroke-linecap="round" stroke-linejoin="round"><path d="M280.7 74.39999999999999L276.3 78.6L280.7 82.8M289.3 74.39999999999999L293.7 78.6L289.3 82.8M287.0 72.8L283.0 84.39999999999999" stroke="#b9744f" stroke-width="1.5"/></svg>
<svg class="b" style="left:495px;top:68px;" width="24" height="22" viewBox="495 68 24 22" fill="none" stroke-linecap="round" stroke-linejoin="round"><path d="M502.2 74.39999999999999L497.8 78.6L502.2 82.8M510.8 74.39999999999999L515.2 78.6L510.8 82.8M508.5 72.8L504.5 84.39999999999999" stroke="#b9744f" stroke-width="1.5"/></svg>
<svg class="b" style="left:707.5px;top:68px;" width="24" height="22" viewBox="707.5 68 24 22" fill="none" stroke-linecap="round" stroke-linejoin="round"><path d="M714.7 74.39999999999999L710.3 78.6L714.7 82.8M723.3 74.39999999999999L727.7 78.6L723.3 82.8M721.0 72.8L717.0 84.39999999999999" stroke="#b9744f" stroke-width="1.5"/></svg>
<svg class="b" style="left:232px;top:70px;" width="18" height="18" viewBox="232 70 18 18" fill="none" stroke-linecap="round" stroke-linejoin="round"><path d="M237 74.200l8.800 8.800M245.800 74.200l-8.800 8.800" stroke="#868a91" stroke-width="1.2"/></svg>
<svg class="b" style="left:1534px;top:66px;" width="22" height="24" viewBox="1534 66 22 24" fill="none" stroke-linecap="round" stroke-linejoin="round"><path d="M1538.800 72.5h12.400" stroke="#ced0d6" stroke-width="1.2" stroke-linecap="butt"/><path d="M1538.800 76.3h12.400" stroke="#ced0d6" stroke-width="1.2" stroke-linecap="butt"/><path d="M1538.800 80.1h12.400" stroke="#ced0d6" stroke-width="1.2" stroke-linecap="butt"/><path d="M1538.800 84h12.400" stroke="#ced0d6" stroke-width="1.2" stroke-linecap="butt"/></svg>
<div class="b" style="left:1565px;top:63.800px;width:30px;height:27.600px;border-radius:5px;background:#4b4e55"></div>
<svg class="b" style="left:1566px;top:66px;" width="28" height="24" viewBox="1566 66 28 24" fill="none" stroke-linecap="round" stroke-linejoin="round"><path d="M1571 72.5h6.200" stroke="#ced0d6" stroke-width="1.2" stroke-linecap="butt"/><path d="M1571 76.3h6.200" stroke="#ced0d6" stroke-width="1.2" stroke-linecap="butt"/><path d="M1571 80.1h6.200" stroke="#ced0d6" stroke-width="1.2" stroke-linecap="butt"/><path d="M1571 84h6.200" stroke="#ced0d6" stroke-width="1.2" stroke-linecap="butt"/><rect x="1580.600" y="71.200" width="7.800" height="13.800" rx="2" stroke="#ced0d6" stroke-width="1.3"/></svg>
<svg class="b" style="left:1604px;top:66px;" width="22" height="24" viewBox="1604 66 22 24" fill="none" stroke-linecap="round" stroke-linejoin="round"><rect x="1607.800" y="71" width="14.200" height="14" rx="2.200" stroke="#ced0d6" stroke-width="1.3"/><circle cx="1617.600" cy="75.600" r="1.700" stroke="#ced0d6" stroke-width="1.1"/><path d="M1608.200 80.200l3.400-3 9.600 7.400" stroke="#ced0d6" stroke-width="1.3"/></svg>
<div class="b" style="left:1636px;top:65.5px;width:1px;height:24.5px;background:#43454a;"></div>
<svg class="b" style="left:1652px;top:66px;" width="12" height="24" viewBox="1652 66 12 24" fill="none" stroke-linecap="round" stroke-linejoin="round"><circle cx="1658" cy="72" r="1.5" fill="#ced0d6"/><circle cx="1658" cy="78.2" r="1.5" fill="#ced0d6"/><circle cx="1658" cy="84.4" r="1.5" fill="#ced0d6"/></svg>
<svg class="b" style="left:1692px;top:60px;" width="32" height="34" viewBox="1692 60 32 34" fill="none" stroke-linecap="round" stroke-linejoin="round"><path d="M1698.200 84.300c2.300-2.400 3.300-5 3.300-8.700a6 6 0 0 1 12 0c0 3.700 1 6.300 3.300 8.700z" stroke="#ced0d6" stroke-width="1.600"/><path d="M1705.300 87.300h4.600a2.300 2.200 0 0 1-4.600 0z" fill="#ced0d6" stroke="none"/><circle cx="1715.600" cy="69.700" r="5.700" fill="#2b2d30"/><circle cx="1715.600" cy="69.700" r="4.500" fill="#548af7"/></svg>
<svg class="b" style="left:1690px;top:112px;" width="36" height="30" viewBox="1690 112 36 30" fill="none" stroke-linecap="round" stroke-linejoin="round"><path d="M1695.60 136.20C1694.80 131.50 1696.40 126.60 1699.80 123.60C1701.60 121.50 1705.60 120.70 1709.00 122.10C1712.00 123.30 1714.00 124.80 1716.20 124.80C1718.20 124.80 1719.40 123.00 1719.30 121.20C1719.20 119.40 1717.80 118.20 1716.20 118.30C1714.80 118.40 1713.80 119.20 1713.60 120.30M1719.30 121.20C1719.80 125.00 1717.60 128.50 1715.00 130.80C1713.30 132.40 1713.00 134.00 1713.00 136.20H1710.60C1710.00 134.60 1709.00 133.80 1707.80 133.80C1706.60 133.80 1705.60 134.60 1705.00 136.20H1703.40C1702.80 134.60 1701.90 133.80 1700.80 133.80C1699.60 133.80 1698.60 134.60 1698.00 136.20H1695.60M1699.80 123.80C1699.60 127.00 1700.80 129.60 1703.00 130.00C1704.80 130.20 1706.20 128.60 1707.40 127.20" stroke="#ced0d6" stroke-width="1.7"/><path d="M1709.70 126.30L1711.30 127.10" stroke="#ced0d6" stroke-width="1.7"/></svg>
<svg class="b" style="left:1692px;top:162px;" width="32" height="32" viewBox="1692 162 32 32" fill="none" stroke-linecap="round" stroke-linejoin="round"><path d="M1710.3999999999999 178.5V170a1.800 1.800 0 0 0-1.800-1.800h-8.200a1.800 1.800 0 0 0-1.800 1.800v15a1.800 1.800 0 0 0 1.800 1.800h1.800" stroke="#ced0d6" stroke-width="1.4"/><path d="M1703.0 172.2h2.600" stroke="#ced0d6" stroke-width="1.4"/><path d="M1704.600 188a6.900 6.900 0 0 1 13.800 0z" stroke="#ced0d6" stroke-width="1.4"/><path d="M1707.400 180.200l1.300 2M1715.600 180.200l-1.300 2" stroke="#ced0d6" stroke-width="1.2"/></svg>
<svg class="b" style="left:1692px;top:212px;" width="32" height="32" viewBox="1692 212 32 32" fill="none" stroke-linecap="round" stroke-linejoin="round"><path d="M1710.3999999999999 228.7V220.2a1.800 1.800 0 0 0-1.800-1.800h-8.200a1.800 1.800 0 0 0-1.800 1.800v15a1.800 1.800 0 0 0 1.800 1.800h1.800" stroke="#ced0d6" stroke-width="1.4"/><path d="M1703.0 222.39999999999998h2.600" stroke="#ced0d6" stroke-width="1.4"/><rect x="1705.200" y="228.800" width="11.400" height="6" rx="0.800" stroke="#ced0d6" stroke-width="1.4"/><path d="M1704.200 237.800h13.400" stroke="#ced0d6" stroke-width="1.4"/></svg>
<svg class="b" style="left:10px;top:62px;" width="32" height="30" viewBox="10 62 32 30" fill="none" stroke-linecap="round" stroke-linejoin="round"><path d="M15 71a2 2 0 0 1 2-2h5.800l3 3.200h8a2 2 0 0 1 2 2v9.300a2 2 0 0 1-2 2h-16.800a2 2 0 0 1-2-2z" stroke="#ced0d6" stroke-width="1.7"/></svg>
<svg class="b" style="left:10px;top:112px;" width="32" height="30" viewBox="10 112 32 30" fill="none" stroke-linecap="round" stroke-linejoin="round"><circle cx="24" cy="121.700" r="4.100" stroke="#ced0d6" stroke-width="1.600"/><rect x="16.300" y="129.700" width="6.900" height="6.800" rx="0.800" stroke="#ced0d6" stroke-width="1.600"/><path d="M31.400 127.600l3.500 6.200h-7z" stroke="#ced0d6" stroke-width="1.600"/></svg>
<svg class="b" style="left:10px;top:170px;" width="32" height="16" viewBox="10 170 32 16" fill="none" stroke-linecap="round" stroke-linejoin="round"><circle cx="17.2" cy="177.700" r="1.700" fill="#ced0d6"/><circle cx="25.4" cy="177.700" r="1.700" fill="#ced0d6"/><circle cx="33.6" cy="177.700" r="1.700" fill="#ced0d6"/></svg>
<svg class="b" style="left:10px;top:634px;" width="32" height="30" viewBox="10 634 32 30" fill="none" stroke-linecap="round" stroke-linejoin="round"><path d="M17.600 641v14.400a.9.900 0 0 0 1.400.8l14.200-7.200a.9.900 0 0 0 0-1.600l-14.200-7.200a.9.900 0 0 0-1.400.8z" stroke="#ced0d6" stroke-width="1.7"/></svg>
<svg class="b" style="left:10px;top:686px;" width="32" height="28" viewBox="10 686 32 28" fill="none" stroke-linecap="round" stroke-linejoin="round"><path d="M21.700 703.200V692.600q0-1.500 1.200-.500L26 695.600H30.700L34.800 692.100q1.300-1 1.300.500V703.200a3.800 3.800 0 0 1-3.800 3.800H25.500a3.800 3.800 0 0 1-3.800-3.800z" stroke="#ced0d6" stroke-width="1.600"/><path d="M14.800 695.600h6.400M16 700h5.200M15.600 704.500h5.600" stroke="#ced0d6" stroke-width="1.600"/><circle cx="25.600" cy="699.800" r="1.250" fill="#ced0d6"/><circle cx="31.700" cy="699.800" r="1.250" fill="#ced0d6"/><path d="M27.300 702.400h2.600l-1.300 1.500z" fill="#ced0d6" stroke="#ced0d6" stroke-width="0.600"/></svg>
<svg class="b" style="left:10px;top:734px;" width="32" height="30" viewBox="10 734 32 30" fill="none" stroke-linecap="round" stroke-linejoin="round"><circle cx="25.600" cy="748.400" r="10.700" stroke="#ced0d6" stroke-width="1.7"/><path d="M25.600 742.400v6.600" stroke="#ced0d6" stroke-width="1.700"/><circle cx="25.600" cy="753" r="1.100" fill="#ced0d6"/></svg>
<svg class="b" style="left:10px;top:784px;" width="32" height="28" viewBox="10 784 32 28" fill="none" stroke-linecap="round" stroke-linejoin="round"><path d="M19.600 788.600h12l5 6.200-11 12.400-11-12.400z" stroke="#ced0d6" stroke-width="1.7"/><path d="M14.800 794.800h21.600M22 794.800l3.600 12M29.200 794.800l-3.600 12M22 794.800l3.600-6 3.600 6" stroke="#ced0d6" stroke-width="1.300"/></svg>
<svg class="b" style="left:10px;top:834px;" width="32" height="30" viewBox="10 834 32 30" fill="none" stroke-linecap="round" stroke-linejoin="round"><rect x="15.200" y="839.400" width="21" height="18.600" rx="2.200" stroke="#ced0d6" stroke-width="1.7"/><path d="M19.800 844.800l3.600 3-3.600 3M25.400 852.400h5.400" stroke="#ced0d6" stroke-width="1.7"/></svg>
<svg class="b" style="left:10px;top:884px;" width="32" height="28" viewBox="10 884 32 28" fill="none" stroke-linecap="round" stroke-linejoin="round"><circle cx="19.800" cy="891.200" r="3.100" stroke="#ced0d6" stroke-width="1.600"/><circle cx="31" cy="895" r="3.100" stroke="#ced0d6" stroke-width="1.600"/><path d="M19.800 894.400v14.200M31 898.200c0 4.200-3.800 5-11.200 5.200" stroke="#ced0d6" stroke-width="1.600"/></svg>
<svg class="b" style="left:1504px;top:108px;" width="24" height="24" viewBox="1504 108 24 24" fill="none" stroke-linecap="round" stroke-linejoin="round"><path d="M1507.400 121.600a7.300 7.300 0 0 1 9.500-9.800" stroke="#db5c5c" stroke-width="1" opacity="0.85"/><circle cx="1515.600" cy="120.600" r="7.100" fill="#db5c5c"/><path d="M1515.600 116.200V121.600" stroke="#1e1f22" stroke-width="1.8" stroke-linecap="butt"/><circle cx="1515.600" cy="124.200" r="1.050" fill="#1e1f22"/></svg>
<svg class="b" style="left:1542px;top:108px;" width="24" height="24" viewBox="1542 108 24 24" fill="none" stroke-linecap="round" stroke-linejoin="round"><path d="M1551.6 123.6L1544.6 123.6L1551.8 112.6L1553.2 114.6" stroke="#f2c55c" stroke-width="1" opacity="0.9"/><path d="M1556 115.2L1562.6 126.4H1549.4Z" fill="#f2c55c" stroke="#f2c55c" stroke-width="1.4"/><path d="M1556 118.4V122.6" stroke="#1e1f22" stroke-width="1.7" stroke-linecap="butt"/><circle cx="1556" cy="124.6" r="0.95" fill="#1e1f22"/></svg>
<svg class="b" style="left:1591px;top:108px;" width="24" height="24" viewBox="1591 108 24 24" fill="none" stroke-linecap="round" stroke-linejoin="round"><path d="M1600.6 123.6L1593.6 123.6L1600.8 112.6L1602.2 114.6" stroke="#d6c6a1" stroke-width="1" opacity="0.9"/><path d="M1605 115.2L1611.6 126.4H1598.4Z" fill="#d6c6a1" stroke="#d6c6a1" stroke-width="1.4"/><path d="M1605 118.4V122.6" stroke="#1e1f22" stroke-width="1.7" stroke-linecap="butt"/><circle cx="1605" cy="124.6" r="0.95" fill="#1e1f22"/></svg>
<svg class="b" style="left:1630px;top:112px;" width="20" height="16" viewBox="1630 112 20 16" fill="none" stroke-linecap="round" stroke-linejoin="round"><path d="M1635.600 122.400L1640.100 117.900L1644.600 122.400" stroke="#9da0a8" stroke-width="1.3"/></svg>
<svg class="b" style="left:1656px;top:112px;" width="20" height="16" viewBox="1656 112 20 16" fill="none" stroke-linecap="round" stroke-linejoin="round"><path d="M1661.600 118L1666.100 122.500L1670.600 118" stroke="#9da0a8" stroke-width="1.3"/></svg>
<svg class="b" style="left:207px;top:598px;" width="18" height="14" viewBox="207 598 18 14" fill="none" stroke-linecap="round" stroke-linejoin="round"><path d="M211.7 603.5L216.1 608.1L220.5 603.5" stroke="#b4b8bf" stroke-width="1.3"/></svg>
<svg class="b" style="left:450px;top:598px;" width="18" height="14" viewBox="450 598 18 14" fill="none" stroke-linecap="round" stroke-linejoin="round"><path d="M454.7 603.5L459.1 608.1L463.5 603.5" stroke="#b4b8bf" stroke-width="1.3"/></svg>
<svg class="b" style="left:527px;top:598px;" width="18" height="14" viewBox="527 598 18 14" fill="none" stroke-linecap="round" stroke-linejoin="round"><path d="M531.7 603.5L536.1 608.1L540.5 603.5" stroke="#b4b8bf" stroke-width="1.3"/></svg>
<svg class="b" style="left:646px;top:598px;" width="18" height="14" viewBox="646 598 18 14" fill="none" stroke-linecap="round" stroke-linejoin="round"><path d="M650.7 603.5L655.1 608.1L659.5 603.5" stroke="#b4b8bf" stroke-width="1.3"/></svg>
<svg class="b" style="left:831px;top:598px;" width="18" height="14" viewBox="831 598 18 14" fill="none" stroke-linecap="round" stroke-linejoin="round"><path d="M835.7 603.5L840.1 608.1L844.5 603.5" stroke="#b4b8bf" stroke-width="1.3"/></svg>
<svg class="b" style="left:242px;top:592px;" width="28" height="28" viewBox="242 592 28 28" fill="none" stroke-linecap="round" stroke-linejoin="round"><path d="M255.100 596.400L263 603.400L255.100 609.800L247.200 603.400Z" stroke="#548af7" stroke-width="1.7" stroke-linejoin="miter"/><path d="M247.400 608.400L255.100 614.800L262.800 608.400" stroke="#548af7" stroke-width="1.7" stroke-linejoin="miter" stroke-linecap="butt"/><path d="M266 611.700V615.900H261.4Z" fill="#ced0d6" stroke="none"/></svg>
<svg class="b" style="left:283px;top:592px;" width="28" height="28" viewBox="283 592 28 28" fill="none" stroke-linecap="round" stroke-linejoin="round"><path d="M289.600 601.200L297.600 597.200L303.800 608.300L295.800 612.500Z" stroke="#ced0d6" stroke-width="1.400"/><path d="M291.400 613.400A9.800 9.800 0 0 1 287.400 602.800" stroke="#ced0d6" stroke-width="1.400"/><path d="M300.400 596A9.800 9.800 0 0 1 305.800 606" stroke="#ced0d6" stroke-width="1.400"/><path d="M307.8 611.700V615.900H303.2Z" fill="#ced0d6" stroke="none"/></svg>
<svg class="b" style="left:326px;top:592px;" width="28" height="28" viewBox="326 592 28 28" fill="none" stroke-linecap="round" stroke-linejoin="round"><path d="M339.400 597.600A7.700 7.700 0 1 0 345.200 607.400A6.400 6.400 0 0 1 339.400 597.600Z" stroke="#ced0d6" stroke-width="1.400"/><path d="M348.7 611.700V615.900H344.09999999999997Z" fill="#ced0d6" stroke="none"/></svg>
<svg class="b" style="left:376px;top:594px;" width="16" height="22" viewBox="376 594 16 22" fill="none" stroke-linecap="round" stroke-linejoin="round"><rect x="379.700" y="598.200" width="8.500" height="13.800" rx="1.500" stroke="#ced0d6" stroke-width="1.300"/><path d="M383.200 600.300h1.600" stroke="#ced0d6" stroke-width="1.100"/></svg>
<svg class="b" style="left:482px;top:596px;" width="22" height="18" viewBox="482 596 22 18" fill="none" stroke-linecap="round" stroke-linejoin="round"><path d="M486.1 610a7 7 0 0 1 14 0z" stroke="#4fd18b" stroke-width="1.3"/><path d="M488.5 600.7l1.6 2.6M497.70000000000005 600.7l-1.6 2.6" stroke="#4fd18b" stroke-width="1.1700000000000002"/><circle cx="490.1" cy="607.1" r="0.8" fill="#4fd18b"/><circle cx="496.1" cy="607.1" r="0.8" fill="#4fd18b"/></svg>
<svg class="b" style="left:560px;top:594px;" width="22" height="22" viewBox="560 594 22 22" fill="none" stroke-linecap="round" stroke-linejoin="round"><circle cx="570.900" cy="605" r="7.900" stroke="#ced0d6" stroke-width="1.400"/><path d="M570.900 597.100A7.900 7.900 0 0 0 570.900 612.900Z" fill="#ced0d6" stroke="none"/></svg>
<svg class="b" style="left:689px;top:594px;" width="22" height="22" viewBox="689 594 22 22" fill="none" stroke-linecap="round" stroke-linejoin="round"><circle cx="700" cy="605" r="7.900" stroke="#ced0d6" stroke-width="1.300"/><ellipse cx="700" cy="605" rx="3.500" ry="7.900" stroke="#ced0d6" stroke-width="1.200"/><path d="M692.400 602.300h15.200M692.400 607.700h15.200" stroke="#ced0d6" stroke-width="1.200"/></svg>
<svg class="b" style="left:66px;top:634px;" width="20" height="24" viewBox="66 634 20 24" fill="none" stroke-linecap="round" stroke-linejoin="round"><rect x="70.400" y="637.300" width="11.600" height="17.200" rx="1.500" stroke="#ced0d6" stroke-width="1.200"/><path d="M73 642.200v-2.200h2M79.400 642.200v-2.200h-2M73 649.600v2.200h2M79.400 649.600v2.200h-2" stroke="#ced0d6" stroke-width="1.100" stroke-linecap="butt"/></svg>
<svg class="b" style="left:1614px;top:594px;" width="24" height="22" viewBox="1614 594 24 22" fill="none" stroke-linecap="round" stroke-linejoin="round"><circle cx="1625.900" cy="604.700" r="7.700" fill="#c75450"/><path d="M1625.900 600.200V605.600" stroke="#2b2d30" stroke-width="1.900" stroke-linecap="butt"/><circle cx="1625.900" cy="608.400" r="1.100" fill="#2b2d30"/></svg>
<svg class="b" style="left:154.5px;top:902px;" width="10" height="16" viewBox="154.5 902 10 16" fill="none" stroke-linecap="round" stroke-linejoin="round"><path d="M158.0 906.600L161.2 909.900L158.0 913.200" stroke="#5e6168" stroke-width="1.200"/></svg>
<svg class="b" style="left:576.5px;top:902px;" width="10" height="16" viewBox="576.5 902 10 16" fill="none" stroke-linecap="round" stroke-linejoin="round"><path d="M580.0 906.600L583.2 909.900L580.0 913.200" stroke="#5e6168" stroke-width="1.200"/></svg>
<svg class="b" style="left:15.7px;top:934px;" width="16" height="18" viewBox="15.7 934 16 18" fill="none" stroke-linecap="round" stroke-linejoin="round"><rect x="18.7" y="938.500" width="8.800" height="8.800" rx="2.400" fill="#25324d" stroke="#548af7" stroke-width="1.300"/></svg>
<svg class="b" style="left:120.7px;top:934px;" width="16" height="18" viewBox="120.7 934 16 18" fill="none" stroke-linecap="round" stroke-linejoin="round"><rect x="123.7" y="938.500" width="8.800" height="8.800" rx="2.400" fill="#25324d" stroke="#548af7" stroke-width="1.300"/></svg>
<svg class="b" style="left:250.6px;top:934px;" width="16" height="18" viewBox="250.6 934 16 18" fill="none" stroke-linecap="round" stroke-linejoin="round"><rect x="253.6" y="938.500" width="8.800" height="8.800" rx="2.400" fill="#25324d" stroke="#548af7" stroke-width="1.300"/></svg>
<svg class="b" style="left:102.2px;top:932px;" width="12" height="20" viewBox="102.2 932 12 20" fill="none" stroke-linecap="round" stroke-linejoin="round"><path d="M105.7 936.700L110.2 941.300L105.7 945.900" stroke="#b4b8bf" stroke-width="1.300"/></svg>
<svg class="b" style="left:177px;top:932px;" width="12" height="20" viewBox="177 932 12 20" fill="none" stroke-linecap="round" stroke-linejoin="round"><path d="M180.5 936.700L185 941.300L180.5 945.900" stroke="#b4b8bf" stroke-width="1.300"/></svg>
<svg class="b" style="left:232px;top:932px;" width="12" height="20" viewBox="232 932 12 20" fill="none" stroke-linecap="round" stroke-linejoin="round"><path d="M235.5 936.700L240 941.300L235.5 945.900" stroke="#b4b8bf" stroke-width="1.300"/></svg>
<svg class="b" style="left:314.1px;top:932px;" width="12" height="20" viewBox="314.1 932 12 20" fill="none" stroke-linecap="round" stroke-linejoin="round"><path d="M317.6 936.700L322.1 941.300L317.6 945.900" stroke="#b4b8bf" stroke-width="1.300"/></svg>
<svg class="b" style="left:368.8px;top:932px;" width="12" height="20" viewBox="368.8 932 12 20" fill="none" stroke-linecap="round" stroke-linejoin="round"><path d="M372.3 936.700L376.8 941.300L372.3 945.900" stroke="#b4b8bf" stroke-width="1.300"/></svg>
<svg class="b" style="left:447.3px;top:932px;" width="12" height="20" viewBox="447.3 932 12 20" fill="none" stroke-linecap="round" stroke-linejoin="round"><path d="M450.8 936.700L455.3 941.300L450.8 945.900" stroke="#b4b8bf" stroke-width="1.300"/></svg>
<svg class="b" style="left:466px;top:932px;" width="24" height="20" viewBox="466 932 24 20" fill="none" stroke-linecap="round" stroke-linejoin="round"><path d="M473.8 937.5999999999999L469.40000000000003 941.8L473.8 946.0M482.40000000000003 937.5999999999999L486.8 941.8L482.40000000000003 946.0M480.1 936.0L476.1 947.5999999999999" stroke="#c77d55" stroke-width="1.5"/></svg>
<svg class="b" style="left:1558px;top:930px;" width="24" height="24" viewBox="1558 930 24 24" fill="none" stroke-linecap="round" stroke-linejoin="round"><path d="M1562.600 936.200h14.800v10.600h-2.600v2.800l-3.400-2.800h-8.800z" stroke="#b4b8bf" stroke-width="1.300"/><path d="M1570 938.600v3.600" stroke="#b4b8bf" stroke-width="1.400"/><circle cx="1570" cy="944.300" r="0.800" fill="#b4b8bf"/></svg>
<svg class="b" style="left:1688px;top:930px;" width="26" height="24" viewBox="1688 930 26 24" fill="none" stroke-linecap="round" stroke-linejoin="round"><rect x="1694" y="941.400" width="11.400" height="8" rx="1.600" stroke="#b4b8bf" stroke-width="1.300"/><path d="M1699.700 944.400v2.200" stroke="#b4b8bf" stroke-width="1.400"/><path d="M1703.200 941.200v-1.600a3 3 0 0 1 6 0v1.200" stroke="#b4b8bf" stroke-width="1.300"/></svg>
<svg class="b" style="left:1655px;top:598px;" width="22" height="22" viewBox="1655 598 22 22" fill="none" stroke-linecap="round" stroke-linejoin="round"><path d="M1659 604.600h14.800M1659 609.500h14.800M1659 614.300h14.800" stroke="#ced0d6" stroke-width="1.100" stroke-linecap="butt"/><circle cx="1669.5" cy="604.6" r="1.500" fill="#2b2d30" stroke="#ced0d6" stroke-width="1"/><circle cx="1663" cy="609.5" r="1.500" fill="#2b2d30" stroke="#ced0d6" stroke-width="1"/><circle cx="1668.4" cy="614.3" r="1.500" fill="#2b2d30" stroke="#ced0d6" stroke-width="1"/></svg>
<svg class="b" style="left:1655px;top:712px;" width="22" height="22" viewBox="1655 712 22 22" fill="none" stroke-linecap="round" stroke-linejoin="round"><rect x="1659.400" y="723.400" width="12.800" height="6.200" rx="1" fill="#ced0d6" stroke="none"/><rect x="1669" y="725.200" width="1.800" height="2" fill="#2b2d30" stroke="none"/><path d="M1663.200 721.800l-3-2.600M1667 720.800l-1.200-4M1670.600 721.200l1.400-4.600" stroke="#ced0d6" stroke-width="2.200" stroke-linecap="butt"/></svg>
<svg class="b" style="left:1655px;top:812px;" width="22" height="22" viewBox="1655 812 22 22" fill="none" stroke-linecap="round" stroke-linejoin="round"><rect x="1658.400" y="816.200" width="7" height="6" rx="0.800" stroke="#ced0d6" stroke-width="1.200"/><rect x="1669" y="816.200" width="5.600" height="5" rx="0.800" stroke="#ced0d6" stroke-width="1.200"/><rect x="1669" y="825.400" width="5.600" height="5" rx="0.800" stroke="#ced0d6" stroke-width="1.200"/><path d="M1665.400 819h3.600M1662 822.200v5.800h7" stroke="#ced0d6" stroke-width="1.200"/></svg>
<div class="b" style="left:1639px;top:700.5px;width:10px;height:114px;background:#47494d;"></div>
<svg class="b" style="left:1624px;top:852px;" width="8" height="18" viewBox="1624 852 8 18" fill="none" stroke-linecap="round" stroke-linejoin="round"><circle cx="1628" cy="856.400" r="1.300" fill="#3a3c40"/><circle cx="1628" cy="865" r="1.300" fill="#3a3c40"/></svg>
</div></body></html>
